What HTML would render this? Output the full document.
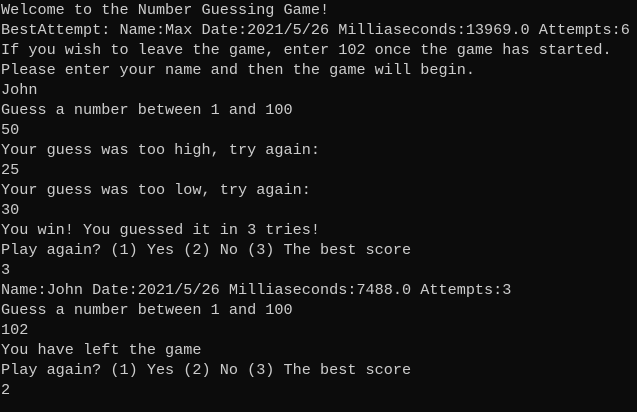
<!DOCTYPE html>
<html><head><style>
html,body{margin:0;padding:0;background:#0c0c0c;width:637px;height:412px;overflow:hidden}
pre{margin:0;padding:0 0 0 1px;font-family:"Liberation Mono",monospace;font-size:15.2px;line-height:20px;color:#cccccc;white-space:pre}
</style></head><body><pre>Welcome to the Number Guessing Game!
BestAttempt: Name:Max Date:2021/5/26 Milliaseconds:13969.0 Attempts:6
If you wish to leave the game, enter 102 once the game has started.
Please enter your name and then the game will begin.
John
Guess a number between 1 and 100
50
Your guess was too high, try again:
25
Your guess was too low, try again:
30
You win! You guessed it in 3 tries!
Play again? (1) Yes (2) No (3) The best score
3
Name:John Date:2021/5/26 Milliaseconds:7488.0 Attempts:3
Guess a number between 1 and 100
102
You have left the game
Play again? (1) Yes (2) No (3) The best score
2</pre></body></html>
